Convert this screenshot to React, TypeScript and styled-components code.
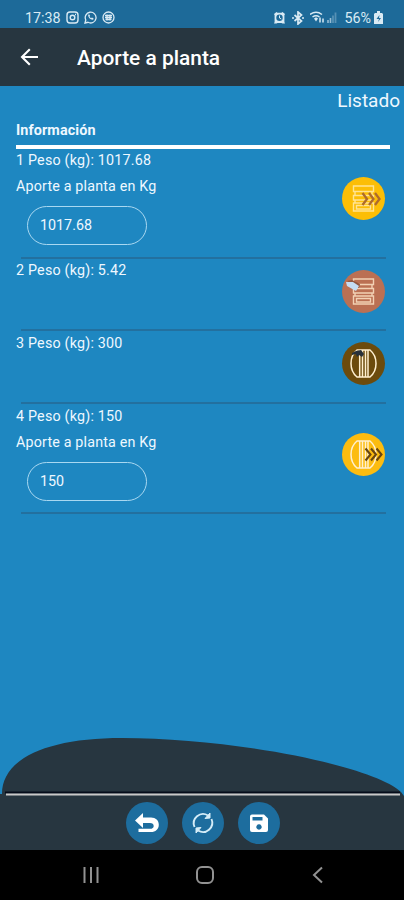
import React from "react";
import styled, { createGlobalStyle } from "styled-components";

const GlobalStyle = createGlobalStyle`
  * { box-sizing: border-box; }
  body { margin: 0; font-family: Roboto, "Liberation Sans", sans-serif; color: #eef8ff; }
`;
const Screen = styled.div`
  width: 404px;
  height: 900px;
  display: flex;
  flex-direction: column;
  overflow: hidden;
  background: #1e87c1;
`;
const StatusBar = styled.div`
  height: 28px;
  flex: none;
  display: flex;
  align-items: center;
  justify-content: space-between;
  padding: 7px 21px 0 25px;
  background: #1d6a99;
  color: #d9eaf4;
  font-size: 14.3px;
  line-height: 18px;
`;
const StatusGroup = styled.div<{ $gap: number }>`
  display: flex;
  align-items: center;
  gap: ${(p) => p.$gap}px;
  svg { display: block; }
`;
const Percent = styled.span`
  margin-right: -3px;
`;
const Header = styled.header`
  height: 58px;
  flex: none;
  display: flex;
  align-items: center;
  padding-left: 20px;
  gap: 38px;
  background: #273640;
`;
const Title = styled.h1`
  margin: 2px 0 0;
  font-size: 20.9px;
  line-height: 28px;
  font-weight: 500;
  color: #fff;
`;
const Main = styled.main`
  flex: 1;
  display: flex;
  flex-direction: column;
`;
const ListLabel = styled.div`
  height: 33px;
  padding: 2px 4px 0 0;
  text-align: right;
  font-size: 19px;
  line-height: 25px;
`;
const Section = styled.section`
  padding: 0 14px 0 16px;
`;
const SectionTitle = styled.h2`
  margin: 0;
  height: 30px;
  padding-top: 3px;
  border-bottom: 4px solid #fff;
  font-size: 14.4px;
  line-height: 18px;
  font-weight: 700;
  letter-spacing: 0.1px;
`;
const Row = styled.div<{ $height: number }>`
  height: ${(p) => p.$height}px;
  display: flex;
  justify-content: space-between;
  padding-right: 5px;
  background: linear-gradient(#23709f, #23709f) 5px 100% / 365px 2px no-repeat;
`;
const Details = styled.div<{ $offset: number }>`
  display: flex;
  flex-direction: column;
  padding-top: ${(p) => p.$offset}px;
  font-size: 14.3px;
  line-height: 18px;
`;
const Weight = styled.span`
  letter-spacing: 0.2px;
`;
const FieldLabel = styled.label`
  margin-top: 8px;
  letter-spacing: 0.17px;
`;
const Field = styled.div`
  width: 120px;
  height: 39px;
  margin: 11px 0 0 11px;
  padding: 9px 12px;
  border: 1px solid #a9d8f1;
  border-radius: 20px;
`;
const Badge = styled.div<{ $top: number; $color: string }>`
  width: 43px;
  height: 43px;
  margin-top: ${(p) => p.$top}px;
  border-radius: 50%;
  background: ${(p) => p.$color};
  svg { display: block; }
`;
const Hill = styled.svg`
  display: block;
  margin-top: auto;
  flex: none;
`;
const Footer = styled.footer`
  height: 54px;
  flex: none;
  display: flex;
  justify-content: center;
  gap: 14px;
  padding: 6px 0 0 2px;
  background: #273640;
`;
const ActionButton = styled.button`
  width: 42px;
  height: 42px;
  padding: 0;
  border: 0;
  border-radius: 50%;
  background: #1d6d9e;
  svg { display: block; }
`;
const NavBar = styled.nav`
  height: 50px;
  flex: none;
  background: #000;
  display: flex;
  align-items: center;
  justify-content: space-between;
  padding: 0 76px 0 81px;
`;

type Kind = "crateOut" | "crateIn" | "barrelIn" | "barrelOut";

const Crate = ({ color }: { color: string }) => (
  <path
    d="M11.500 9h20v5.500h-20zM11.500 18.500h20v4.500h-20zM11.500 26h20v8h-20zM14.500 28.500h14v3.500h-14zM13 14.500v4M30 14.500v4M13 23v3M30 23v3"
    fill="none"
    stroke={color}
    strokeWidth="1.4"
  />
);
const Barrel = () => (
  <path
    d="M15 8h13q6 5 6 13.500T28 35H15Q9 30 9 21.500T15 8zM17.700 8v27M20.500 8v27M23.500 8v27M26 8v27"
    fill="none"
    stroke="#fff0d0"
    strokeWidth="1.5"
  />
);

const KindIcon = ({ kind }: { kind: Kind }) => (
  <svg width="43" height="43" viewBox="0 0 43 43">
    {kind === "crateOut" && (
      <>
        <Crate color="#ffe493" />
        <path d="m20.500 16 4.500 6-4.500 6m6.500-12 4.500 6-4.500 6m6-12 4.500 6-4.500 6" fill="none" stroke="#ad6a2d" strokeWidth="2.300" />
      </>
    )}
    {kind === "crateIn" && (
      <>
        <Crate color="#f2d1b4" />
        <path d="m5 11 5-1 8 4-1 4-6-3z" fill="#93563f" />
        <path d="m4 12 7 0 6 4-3 5-9-5z" fill="#c4dcf3" />
      </>
    )}
    {kind === "barrelIn" && (
      <>
        <Barrel />
        <path d="m10 11 4-2 5-1 3 4-2 3-3-2-2 2-1-3-4 1z" fill="#28313a" />
      </>
    )}
    {kind === "barrelOut" && (
      <>
        <Barrel />
        <path d="m23.500 15.500 5 6-5 6m5.500-12 5 6-5 6m5.500-12 5 6-5 6" fill="none" stroke="#684510" strokeWidth="2.100" />
      </>
    )}
  </svg>
);

type Item = {
  id: number;
  weight: string;
  height: number;
  offset: number;
  top: number;
  color: string;
  kind: Kind;
  input?: boolean;
};

const rows: Item[] = [
  { id: 1, weight: "1017.68", height: 110, offset: 2, top: 28, color: "#fcbe06", kind: "crateOut", input: true },
  { id: 2, weight: "5.42", height: 72, offset: 2, top: 11, color: "#bb7053", kind: "crateIn" },
  { id: 3, weight: "300", height: 73, offset: 3, top: 11, color: "#6c4b0d", kind: "barrelIn" },
  { id: 4, weight: "150", height: 110, offset: 3, top: 29, color: "#fcbc10", kind: "barrelOut", input: true },
];

export default function App() {
  return (
    <Screen>
      <GlobalStyle />
      <StatusBar>
        <StatusGroup $gap={5}>
          <span>17:38</span>
          <svg width="13" height="13" viewBox="0 0 13 13" fill="none" stroke="currentColor" strokeWidth="1.4">
            <rect x="1" y="1" width="11" height="11" rx="3" /><circle cx="6.500" cy="6.500" r="2.300" /><path d="M9 3.500h1" />
          </svg>
          <svg width="13" height="13" viewBox="0 0 13 13" fill="none" stroke="currentColor" strokeWidth="1.3">
            <path d="m1 12 .8-3A5.400 5.400 0 1 1 4 11.300z" /><path d="M4.300 3.500c-.8 2.300 2.200 5.600 4.900 5.200l.3-1.400-1.600-.7-.9.7-1.500-1.500.6-.8-.7-1.500z" fill="currentColor" stroke="none" />
          </svg>
          <svg width="13" height="13" viewBox="0 0 13 13" fill="none" stroke="currentColor" strokeWidth="1.300">
            <circle cx="6.500" cy="6.500" r="5.500" /><path d="M3 4.500h7M3 6.500h7M3.500 8.500h6M5 3.500v6M8 3.500v6" />
          </svg>
        </StatusGroup>
        <StatusGroup $gap={6}>
          <svg width="13" height="13" viewBox="0 0 13 13">
            <path d="m1 3 2.500-2 1 .8h4l1-.8L12 3l-.6 1.300V11l.6 1.500H9.500L8.500 12h-4l-1 .5H1L1.600 11V4.300z" fill="currentColor" />
            <circle cx="6.500" cy="6.800" r="3.200" fill="#1d6a99" /><path d="M6.500 4.500V7l1.800 1" stroke="currentColor" fill="none" />
          </svg>
          <svg width="12" height="14" viewBox="0 0 12 14" fill="none" stroke="currentColor" strokeWidth="1.700">
            <path d="m2.500 4 7 6L6 13V1l3.500 3-7 6M0 7h2M10 7h2" />
          </svg>
          <svg width="28" height="13" viewBox="0 0 28 13" fill="none" stroke="currentColor" strokeWidth="1.500">
            <path d="M0 3.500q6-4.500 12 0M2.500 6q3.500-2.500 7 0" /><path d="m4 7.500 2-1.200 2 1.200-2 3z" fill="currentColor" stroke="none" />
            <path d="M10 11.500V6.500M13 7.500v4" /><path d="M18 12V9M20.500 12V7" strokeWidth="1.600" opacity=".65" /><path d="M23 12V4.500M25.500 12V1.500" strokeWidth="1.800" opacity=".3" />
          </svg>
          <Percent>56%</Percent>
          <svg width="9" height="13" viewBox="0 0 9 13">
            <path d="M3 0h3v2h2l1 1v10H0V3l1-1h2z" fill="currentColor" /><path d="m5.500 4-3 4H5l-1 3 3-4H5z" fill="#1d6a99" />
          </svg>
        </StatusGroup>
      </StatusBar>
      <Header>
        <svg width="19" height="18" viewBox="0 0 19 18" fill="none" stroke="#fff" strokeWidth="2.100">
          <path d="M18 9H2M9.800 1.200 2 9l7.800 7.800" />
        </svg>
        <Title>Aporte a planta</Title>
      </Header>
      <Main>
        <ListLabel>Listado</ListLabel>
        <Section>
          <SectionTitle>Información</SectionTitle>
          {rows.map((r) => (
            <Row key={r.id} $height={r.height}>
              <Details $offset={r.offset}>
                <Weight>{r.id} Peso (kg): {r.weight}</Weight>
                {r.input && (
                  <>
                    <FieldLabel>Aporte a planta en Kg</FieldLabel>
                    <Field>{r.weight}</Field>
                  </>
                )}
              </Details>
              <Badge $top={r.top} $color={r.color}><KindIcon kind={r.kind} /></Badge>
            </Row>
          ))}
        </Section>
        <Hill width="404" height="60" viewBox="0 0 404 60">
          <path d="M0 60V58H2C2 22 48 2 122 2C230 2 372 29 401 56L404 60z" fill="#273640" />
          <path d="M5 56.500h395" stroke="#050c1a" strokeWidth="2" />
          <path d="M6 58.500h394" stroke="#c9c9c9" strokeWidth="2" />
        </Hill>
      </Main>
      <Footer>
        <ActionButton aria-label="Volver">
          <svg width="42" height="42" viewBox="0 0 42 42">
            <path d="M17 11v4.500h8c4.700 0 7.800 3 7.800 7.200 0 4.600-3.300 7.300-7.800 7.300H12.500v-3.200H24c2.400 0 3.700-1.200 3.700-2.900S26.400 21 24 21h-7v5l-8-7.500z" fill="#fff" />
          </svg>
        </ActionButton>
        <ActionButton aria-label="Actualizar">
          <svg width="42" height="42" viewBox="0 0 42 42" fill="none" stroke="#d5edf8" strokeWidth="1.900">
            <path d="M12.500 25a9.300 9.300 0 0 1 13.500-11.500M29.500 17A9.300 9.300 0 0 1 16 28.500" />
            <path d="m23 16.500 5-.5V11zM19 25.500l-5 .5v5z" fill="#d5edf8" strokeWidth="1" />
          </svg>
        </ActionButton>
        <ActionButton aria-label="Guardar">
          <svg width="42" height="42" viewBox="0 0 42 42">
            <path fillRule="evenodd" fill="#fff" d="M14 12.500h12l4 4V28q0 2-2 2H14q-2 0-2-2V14.500q0-2 2-2zM14.500 15v3.500h10V15zM21 22.300a2.700 2.700 0 1 0 .01 0z" />
          </svg>
        </ActionButton>
      </Footer>
      <NavBar>
        <svg width="20" height="18" viewBox="0 0 20 18" stroke="#929292" strokeWidth="2"><path d="M3.500 1v16M10 1v16M16.500 1v16" /></svg>
        <svg width="20" height="20" viewBox="0 0 20 20" fill="none" stroke="#929292" strokeWidth="2"><rect x="2" y="2" width="16" height="16" rx="5" /></svg>
        <svg width="20" height="18" viewBox="0 0 20 18" fill="none" stroke="#929292" strokeWidth="2"><path d="M14 1.500 6 9l8 7.500" /></svg>
      </NavBar>
    </Screen>
  );
}
